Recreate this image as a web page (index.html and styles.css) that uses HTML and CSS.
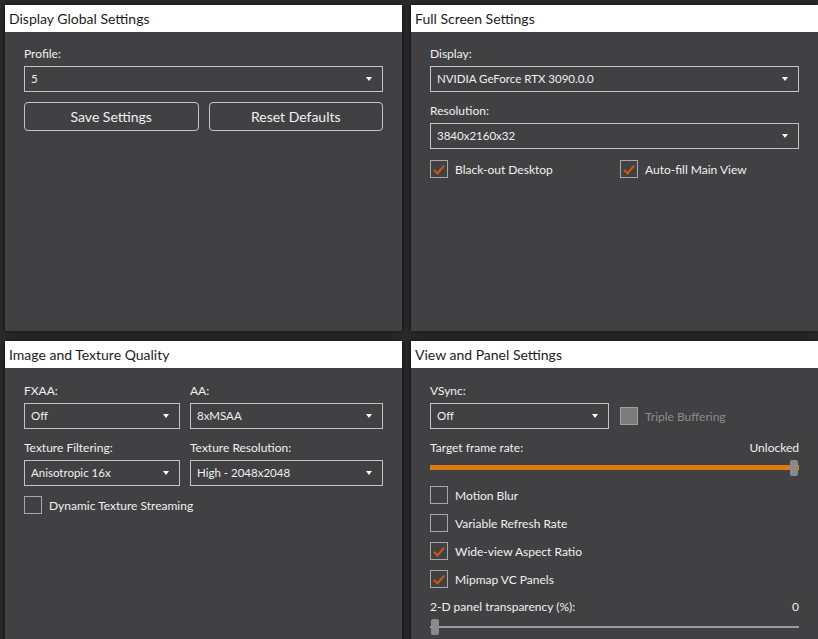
FILE: index.html
```html
<!DOCTYPE html>
<html lang="en">
<head>
  <meta charset="UTF-8">
  <title>Display Settings</title>
  <link rel="stylesheet" href="styles.css">
</head>
<body>
  <main class="grid">

    <section class="panel">
      <h2 class="panel-title">Display Global Settings</h2>
      <div class="panel-body">
        <label class="field-label">Profile:</label>
        <div class="select"><span>5</span><i class="caret"></i></div>
        <div class="button-row">
          <button class="btn">Save Settings</button>
          <button class="btn">Reset Defaults</button>
        </div>
      </div>
    </section>

    <section class="panel">
      <h2 class="panel-title">Full Screen Settings</h2>
      <div class="panel-body">
        <label class="field-label">Display:</label>
        <div class="select"><span>NVIDIA GeForce RTX 3090.0.0</span><i class="caret"></i></div>
        <label class="field-label spaced">Resolution:</label>
        <div class="select"><span>3840x2160x32</span><i class="caret"></i></div>
        <div class="pair-row check-top">
          <div class="check on"><span class="box"></span>Black-out Desktop</div>
          <div class="check on"><span class="box"></span>Auto-fill Main View</div>
        </div>
      </div>
    </section>

    <section class="panel">
      <h2 class="panel-title">Image and Texture Quality</h2>
      <div class="panel-body body-low">
        <div class="quality-grid">
          <div>
            <label class="field-label">FXAA:</label>
            <div class="select"><span>Off</span><i class="caret"></i></div>
          </div>
          <div>
            <label class="field-label">AA:</label>
            <div class="select"><span>8xMSAA</span><i class="caret"></i></div>
          </div>
          <div>
            <label class="field-label">Texture Filtering:</label>
            <div class="select"><span>Anisotropic 16x</span><i class="caret"></i></div>
          </div>
          <div>
            <label class="field-label">Texture Resolution:</label>
            <div class="select"><span>High - 2048x2048</span><i class="caret"></i></div>
          </div>
        </div>
        <div class="check check-gap"><span class="box"></span>Dynamic Texture Streaming</div>
      </div>
    </section>

    <section class="panel">
      <h2 class="panel-title">View and Panel Settings</h2>
      <div class="panel-body body-low">
        <label class="field-label">VSync:</label>
        <div class="pair-row">
          <div class="select"><span>Off</span><i class="caret"></i></div>
          <div class="check disabled"><span class="box"></span>Triple Buffering</div>
        </div>

        <div class="value-row spaced"><span>Target frame rate:</span><span>Unlocked</span></div>
        <div class="slider">
          <div class="track"></div>
          <div class="fill" style="width: 100%"></div>
          <div class="thumb" style="left: calc(100% - 9px)"></div>
        </div>

        <div class="check-list">
          <div class="check"><span class="box"></span>Motion Blur</div>
          <div class="check"><span class="box"></span>Variable Refresh Rate</div>
          <div class="check on"><span class="box"></span>Wide-view Aspect Ratio</div>
          <div class="check on"><span class="box"></span>Mipmap VC Panels</div>
        </div>

        <div class="value-row"><span>2-D panel transparency (%):</span><span>0</span></div>
        <div class="slider">
          <div class="track thin"></div>
          <div class="thumb" style="left: 1px"></div>
        </div>
      </div>
    </section>

  </main>
</body>
</html>
```

FILE: styles.css
```css
body {
  margin: 0;
  background-color: #2b2b2c;
  font-family: 'Lato', 'Noto Sans', sans-serif;
  font-size: 12px;
  color: #f0f0f0;
  overflow: hidden;
}

.grid {
  display: grid;
  grid-template-columns: 397px 407px;
  grid-template-rows: 326px 310px;
  column-gap: 9px;
  row-gap: 10px;
  padding: 5px 0 0 5px;
}

.panel {
  background-color: #414143;
  box-shadow: 0 0 6px #000000aa;
}

.panel-title {
  margin: 0;
  height: 27px;
  line-height: 27px;
  padding: 0 4px;
  background-color: #ffffff;
  color: #1c1c1c;
  font-size: 14px;
  font-weight: normal;
}

.panel-body {
  padding: 14px 19px 0;
}

.body-low {
  padding-top: 15px;
}

.field-label {
  display: block;
  height: 16px;
  line-height: 16px;
  margin-bottom: 4px;
}

.spaced {
  margin-top: 11px;
}

.select {
  position: relative;
  height: 26px;
  box-sizing: border-box;
  border: 1px solid #c4c4c4;
  padding: 0 24px 0 6px;
  line-height: 24px;
  font-size: 11.5px;
}

.caret {
  position: absolute;
  right: 10px;
  top: 10px;
  border-left: 3.5px solid transparent;
  border-right: 3.5px solid transparent;
  border-top: 4px solid #ffffff;
}

.button-row {
  display: grid;
  grid-template-columns: 1fr 1fr;
  gap: 10px;
  margin-top: 10px;
}

.btn {
  height: 29px;
  background: transparent;
  border: 1px solid #c4c4c4;
  border-radius: 4px;
  color: #f0f0f0;
  font-family: inherit;
  font-size: 14px;
}

.pair-row {
  display: grid;
  grid-template-columns: 179px 1fr;
  column-gap: 11px;
  align-items: center;
}

.check-top {
  margin-top: 11px;
}

.check {
  display: flex;
  align-items: center;
  gap: 7px;
  height: 18px;
  font-size: 12px;
}

.check .box {
  position: relative;
  width: 18px;
  height: 18px;
  box-sizing: border-box;
  border: 1px solid #a8a8a8;
  flex: none;
}

/* orange tick drawn with two borders of a rotated box */
.check.on .box::after {
  content: "";
  position: absolute;
  left: 5px;
  top: 1.5px;
  width: 4px;
  height: 9px;
  border-right: 2.5px solid #cc5a14;
  border-bottom: 2.5px solid #cc5a14;
  transform: rotate(40deg);
}

.check.disabled {
  color: #8c8c8c;
}

.check.disabled .box {
  background-color: #7c7c7c;
  border-color: #a0a0a0;
}

.check-gap {
  margin-top: 10px;
}

.quality-grid {
  display: grid;
  grid-template-columns: 156px 1fr;
  column-gap: 10px;
  row-gap: 11px;
}

.value-row {
  display: flex;
  justify-content: space-between;
  height: 16px;
  line-height: 16px;
}

.slider {
  position: relative;
  height: 16px;
  margin-top: 4px;
}

.track {
  position: absolute;
  left: 0;
  right: 0;
  top: 6px;
  height: 4px;
  background-color: #9a9a9a;
}

.track.thin {
  top: 7px;
  height: 2px;
}

.fill {
  position: absolute;
  left: 0;
  top: 5px;
  height: 5px;
  background-color: #dc7a10;
}

.thumb {
  position: absolute;
  top: 0;
  width: 8px;
  height: 16px;
  border-radius: 2px;
  background-color: #8a8a8a;
}

.check-list {
  display: flex;
  flex-direction: column;
  gap: 10px;
  margin: 10px 0 11px;
}
```
